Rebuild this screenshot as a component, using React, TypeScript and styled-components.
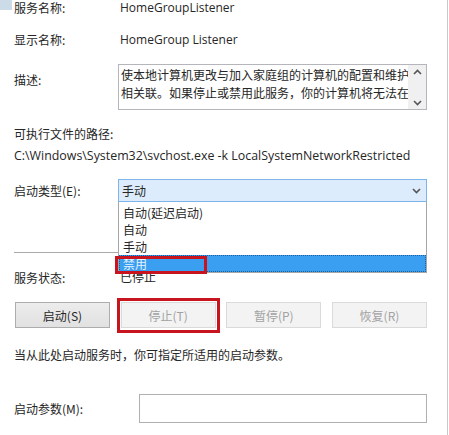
import React from "react";
import styled, { createGlobalStyle } from "styled-components";

const Global = createGlobalStyle`
  html, body { margin: 0; padding: 0; background: #ffffff; }
  body { font-family: "Noto Sans", "Noto Sans CJK SC", sans-serif; font-size: 12px; color: #262626; }
`;

const Page = styled.div`
  position: relative;
  box-sizing: border-box;
  width: 448px;
  height: 435px;
  padding: 0 20px 0 14px;
  border-right: 1px solid #c9c9c9;
  background: #fff;
  overflow: hidden;
`;

const Corner = styled.div`
  position: absolute;
  left: 0;
  top: 0;
  width: 12px;
  height: 10px;
  background: #cbdbe8;
`;

const Row = styled.div<{ $top: number; $h?: number; $align?: string }>`
  display: grid;
  grid-template-columns: 104px 1fr;
  align-items: ${(p) => p.$align || "center"};
  margin-top: ${(p) => p.$top}px;
  min-height: ${(p) => p.$h || 16}px;
`;

const Label = styled.div<{ $pt?: number }>`
  font-family: "Noto Sans CJK SC", sans-serif;
  line-height: 16px;
  white-space: nowrap;
  padding-top: ${(p) => p.$pt || 0}px;
`;

const Value = styled.div`
  font-family: "Open Sans", "Noto Sans CJK SC", sans-serif;
  line-height: 16px;
  padding-left: 2px;
  white-space: nowrap;
`;

const Line = styled.div<{ $top: number; $latin?: boolean }>`
  margin-top: ${(p) => p.$top}px;
  line-height: 16px;
  white-space: nowrap;
  font-family: ${(p) =>
    p.$latin ? '"Open Sans", "Noto Sans CJK SC", sans-serif' : '"Noto Sans CJK SC", sans-serif'};
  font-size: ${(p) => (p.$latin ? "12.4px" : "12px")};
`;

const DescBox = styled.div`
  box-sizing: border-box;
  height: 46px;
  border: 1px solid #b4b6bb;
  display: grid;
  grid-template-columns: 1fr 18px;
`;

const DescText = styled.div`
  font-family: "Noto Sans CJK SC", sans-serif;
  line-height: 18px;
  padding: 1px 0 0 2px;
  white-space: nowrap;
  overflow: hidden;
  font-size: 12px;
`;

const ScrollBar = styled.div`
  background: #f0f0f0;
  display: flex;
  flex-direction: column;
  justify-content: space-between;
  align-items: center;
  padding: 4px 0 3px;
  color: #555;
`;

const Combo = styled.div`
  box-sizing: border-box;
  height: 23px;
  border: 1px solid #7eb4ea;
  background: #dcecfc;
  display: flex;
  align-items: center;
  justify-content: space-between;
  padding: 0 5px 0 3px;
  font-family: "Noto Sans CJK SC", sans-serif;
  position: relative;
`;

const Dropdown = styled.div`
  position: absolute;
  left: -1px;
  right: -1px;
  top: 22px;
  box-sizing: border-box;
  border: 1px solid #a6a6a6;
  border-top: none;
  background: #fff;
  padding-top: 2px;
  z-index: 2;
`;

const Item = styled.div<{ $sel?: boolean }>`
  height: 17px;
  line-height: 17px;
  padding-left: 4px;
  font-family: "Noto Sans CJK SC", sans-serif;
  background: ${(p) => (p.$sel ? "#3a9ff0" : "transparent")};
  color: ${(p) => (p.$sel ? "#e8f3ff" : "#262626")};
  outline: ${(p) => (p.$sel ? "1px dotted #1c5f9c" : "none")};
  outline-offset: -1px;
  position: relative;
`;

const RedMark = styled.div<{ $l: number; $t: number; $w: number; $h: number }>`
  position: absolute;
  left: ${(p) => p.$l}px;
  top: ${(p) => p.$t}px;
  width: ${(p) => p.$w}px;
  height: ${(p) => p.$h}px;
  box-sizing: border-box;
  border: 3px solid #c8141e;
  pointer-events: none;
  z-index: 3;
`;

const Separator = styled.div`
  margin-top: 50px;
  height: 1px;
  background: #a9a9a9;
`;

const Buttons = styled.div`
  margin-top: 16px;
  display: grid;
  grid-template-columns: repeat(4, 95px);
  justify-content: space-between;
  padding-left: 1px;
`;

const Btn = styled.div<{ $disabled?: boolean }>`
  position: relative;
  box-sizing: border-box;
  height: 26px;
  display: flex;
  align-items: center;
  justify-content: center;
  font-family: "Noto Sans CJK SC", sans-serif;
  border: 1px solid ${(p) => (p.$disabled ? "#dadada" : "#adadad")};
  background: ${(p) => (p.$disabled ? "#f3f3f3" : "linear-gradient(#ececec, #e1e1e1)")};
  color: ${(p) => (p.$disabled ? "#a2a2a2" : "#262626")};
`;

const InputWrap = styled.div`
  padding-left: 21px;
`;

const Input = styled.div`
  box-sizing: border-box;
  height: 29px;
  border: 1px solid #b0b0b0;
  background: #fff;
`;

const Chevron = ({ up }: { up?: boolean }) => (
  <svg width="9" height="6" viewBox="0 0 9 6">
    <path
      d={up ? "M1 5 L4.5 1.5 L8 5" : "M1 1 L4.5 4.5 L8 1"}
      fill="none"
      stroke="#555"
      strokeWidth="1.6"
    />
  </svg>
);

export default function App() {
  return (
    <>
      <Global />
      <Page>
        <Corner />
        <Row $top={0}>
          <Label>服务名称:</Label>
          <Value>HomeGroupListener</Value>
        </Row>
        <Row $top={16}>
          <Label>显示名称:</Label>
          <Value>HomeGroup Listener</Value>
        </Row>
        <Row $top={16} $align="start">
          <Label $pt={8}>描述:</Label>
          <DescBox>
            <DescText>
              使本地计算机更改与加入家庭组的计算机的配置和维护
              <br />
              相关联。如果停止或禁用此服务，你的计算机将无法在
            </DescText>
            <ScrollBar>
              <Chevron up />
              <Chevron />
            </ScrollBar>
          </DescBox>
        </Row>
        <Line $top={16}>可执行文件的路径:</Line>
        <Line $top={6} $latin>
          C:\Windows\System32\svchost.exe -k LocalSystemNetworkRestricted
        </Line>
        <Row $top={15} $h={23}>
          <Label>启动类型(E):</Label>
          <Combo>
            <span>手动</span>
            <Chevron />
            <Dropdown>
              <Item>自动(延迟启动)</Item>
              <Item>自动</Item>
              <Item>手动</Item>
              <Item $sel>禁用</Item>
            </Dropdown>
          </Combo>
        </Row>
        <Separator />
        <Row $top={17}>
          <Label>服务状态:</Label>
          <Value>已停止</Value>
        </Row>
        <RedMark $l={115} $t={256} $w={92} $h={18} />
        <Buttons>
          <Btn>启动(S)</Btn>
          <Btn $disabled>
            停止(T)
            <RedMark $l={-5} $t={-5} $w={103} $h={35} />
          </Btn>
          <Btn $disabled>暂停(P)</Btn>
          <Btn $disabled>恢复(R)</Btn>
        </Buttons>
        <Line $top={19}>当从此处启动服务时，你可指定所适用的启动参数。</Line>
        <Row $top={31} $h={29}>
          <Label>启动参数(M):</Label>
          <InputWrap>
            <Input />
          </InputWrap>
        </Row>
      </Page>
    </>
  );
}
